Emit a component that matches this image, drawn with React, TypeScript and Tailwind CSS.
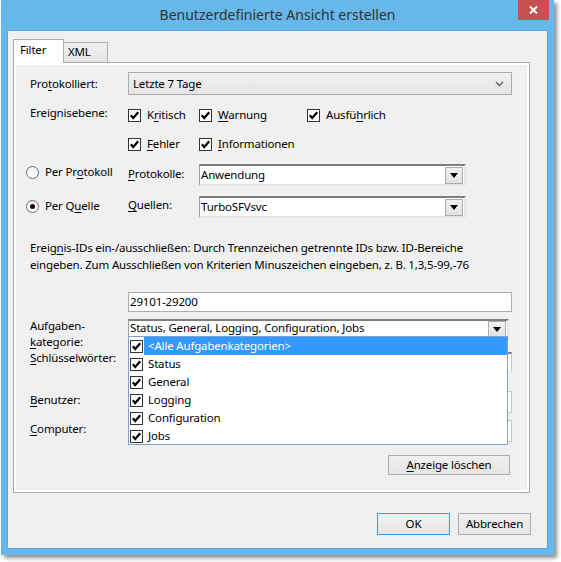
import React from "react";

function U({ children }: { children: React.ReactNode }) {
  return <span className="underline underline-offset-[2px] decoration-1">{children}</span>;
}

function Check() {
  return (
    <span className="w-[13px] h-[13px] shrink-0 border border-[#333] bg-white flex items-center justify-center">
      <svg width="11" height="11" viewBox="0 0 11 11">
        <path d="M1.8 5.3 L4.2 8 L9.2 2.2" fill="none" stroke="#000" strokeWidth="2.2" />
      </svg>
    </span>
  );
}

function CheckItem({ label, w }: { label: React.ReactNode; w?: string }) {
  return (
    <div className={`flex items-center gap-[6px] ${w ?? ""}`}>
      <Check />
      <span className="-mt-[2px]">{label}</span>
    </div>
  );
}

function Radio({ on }: { on?: boolean }) {
  return (
    <span className="w-[13px] h-[13px] shrink-0 rounded-full border border-[#6b6b6b] bg-gradient-to-b from-[#f4f4f4] to-white flex items-center justify-center">
      {on && <span className="w-[5px] h-[5px] rounded-full bg-[#1d0a0a]" />}
    </span>
  );
}

function DropBtn() {
  return (
    <span className="w-[18px] h-[17px] border border-[#adadad] bg-gradient-to-b from-[#f2f2f2] to-[#e2e2e2] flex items-center justify-center">
      <svg width="8" height="5" viewBox="0 0 8 5">
        <path d="M0 0 H8 L4 5 Z" fill="#000" />
      </svg>
    </span>
  );
}

function SunkenCombo({ value, w }: { value: string; w: string }) {
  return (
    <div
      className={`${w} h-[22px] bg-white border-t-2 border-l border-r-2 border-b-2 border-t-[#7e7e7e] border-l-[#a0a0a0] border-r-[#e6e6e6] border-b-[#e6e6e6] flex items-center justify-between pr-[1px]`}
    >
      <span className="pl-[1px]">{value}</span>
      <DropBtn />
    </div>
  );
}

const categories = ["<Alle Aufgabenkategorien>", "Status", "General", "Logging", "Configuration", "Jobs"];

export default function App() {
  return (
    <div className="w-[561px] h-[562px] bg-white font-['Segoe_UI','Noto_Sans',sans-serif] text-[11.5px] tracking-[-0.17px] text-black">
      <div className="ml-[1px] w-[553px] h-[555px] bg-[#67b7ea] shadow-[3px_3px_4px_rgba(0,0,0,0.45)] flex flex-col">
        {/* title bar */}
        <div className="h-[30px] relative flex items-center justify-center">
          <span className="text-[14px] tracking-normal text-[#333] mt-[-1px]">Benutzerdefinierte Ansicht erstellen</span>
          <div className="absolute right-[5px] top-0 w-[31px] h-[20px] bg-[#c75050] flex items-center justify-center">
            <svg width="9" height="8" viewBox="0 0 9 8">
              <path d="M1 0.5 L8 7.5 M8 0.5 L1 7.5" stroke="#fff" strokeWidth="2" />
            </svg>
          </div>
        </div>

        {/* client area */}
        <div className="mx-[6px] mb-[6px] flex-1 bg-[#f0f0f0] border border-[#5aa5db] flex flex-col">
          {/* tabs */}
          <div className="ml-[5px] mt-[8px] flex items-end relative z-10">
            <div className="w-[51px] h-[24px] bg-white border border-b-0 border-[#acacac] pl-[6px] pt-[1px]">Filter</div>
            <div className="w-[44px] h-[20px] bg-gradient-to-b from-[#f0f0f0] to-[#e5e5e5] border border-l-0 border-b-0 border-[#acacac] pl-[4px] mb-[1px]">
              XML
            </div>
          </div>
          <div className="ml-[5px] -mt-[1px] w-[517px] h-[431px] border border-[#acacac] shadow-[inset_0_0_0_2px_#fff] pl-[16px] flex flex-col">
            {/* Protokolliert */}
            <div className="mt-[9px] h-[23px] flex items-center">
              <span className="w-[98px]">
                Pro<U>t</U>okolliert:
              </span>
              <div className="w-[384px] h-[23px] border border-[#acacac] bg-gradient-to-b from-[#f0f0f0] to-[#e5e5e5] flex items-center justify-between pl-[4px] pr-[7px]">
                <span>Letzte 7 Tage</span>
                <svg width="9" height="6" viewBox="0 0 9 6">
                  <path d="M1 1 L4.5 4.5 L8 1" fill="none" stroke="#6a6a6a" strokeWidth="1.6" />
                </svg>
              </div>
            </div>

            {/* Ereignisebene */}
            <div className="mt-[11px] h-[19px] flex items-center">
              <span className="w-[98px] -mt-[5px]">Ereignisebene:</span>
              <CheckItem w="w-[71px]" label={<>K<U>r</U>itisch</>} />
              <CheckItem w="w-[108px]" label={<><U>W</U>arnung</>} />
              <CheckItem label={<>Ausfü<U>h</U>rlich</>} />
            </div>
            <div className="mt-[10px] h-[19px] flex items-center pl-[98px]">
              <CheckItem w="w-[71px]" label={<><U>F</U>ehler</>} />
              <CheckItem label={<><U>I</U>nformationen</>} />
            </div>

            {/* Per Protokoll */}
            <div className="mt-[10px] h-[22px] flex items-start -ml-[4px]">
              <div className="w-[102px] flex items-center gap-[6px] mt-[1px]">
                <Radio />
                <span className="-mt-[2px]">
                  Per Pr<U>o</U>tokoll
                </span>
              </div>
              <span className="w-[71px] mt-[1px]">
                <U>P</U>rotokolle:
              </span>
              <SunkenCombo w="w-[267px]" value="Anwendung" />
            </div>
            <div className="mt-[10px] h-[22px] flex items-start -ml-[4px]">
              <div className="w-[102px] flex items-center gap-[6px] mt-[3px]">
                <Radio on />
                <span className="-mt-[2px]">
                  Per Q<U>u</U>elle
                </span>
              </div>
              <span className="w-[71px] mt-[0px]">
                <U>Q</U>uellen:
              </span>
              <SunkenCombo w="w-[267px]" value="TurboSFVsvc" />
            </div>

            {/* description */}
            <p className="mt-[21px] leading-[17px]">
              Ereig<U>n</U>is-IDs ein-/ausschließen: Durch Trennzeichen getrennte IDs bzw. ID-Bereiche
              <br />
              eingeben. Zum Ausschließen von Kriterien Minuszeichen eingeben, z. B. 1,3,5-99,-76
            </p>

            <div className="mt-[19px] ml-[98px] w-[384px] h-[20px] border border-[#abadb3] bg-white flex items-center pl-[1px]">
              29101-29200
            </div>

            {/* Aufgabenkategorie */}
            <div className="mt-[7px] h-[22px] flex items-start">
              <span className="w-[98px] leading-[16px] -mt-[1px]">
                Aufgaben-
                <br />
                <U>k</U>ategorie:
              </span>
              <div className="relative">
                <div className="w-[381px] h-[22px] bg-white border-t-2 border-l border-r-2 border-b-2 border-t-[#7e7e7e] border-l-[#a0a0a0] border-r-[#e6e6e6] border-b-[#e6e6e6] flex items-start justify-between pr-[1px]">
                  <span className="pl-[1px] -mt-[2px]">Status, General, Logging, Configuration, Jobs</span>
                  <DropBtn />
                </div>
                <div className="absolute left-0 top-[17px] w-[380px] h-[109px] bg-white border border-[#7da2ce] z-20 flex flex-col">
                  {categories.map((c, i) => (
                    <div key={c} className="h-[18px] flex items-center pl-[1px]">
                      <Check />
                      <span
                        className={`ml-[1px] h-[18px] flex-1 flex items-center pl-[4px] ${
                          i === 0 ? "bg-[#3399ff] text-white" : ""
                        }`}
                      >
                        {c}
                      </span>
                    </div>
                  ))}
                </div>
              </div>
            </div>

            {/* Schlüsselwörter */}
            <div className="mt-[11px] h-[20px] flex items-start">
              <span className="w-[98px] -mt-[3px]">
                <U>S</U>chlüsselwörter:
              </span>
              <div className="w-[384px] h-[20px] bg-white border-t-2 border-l border-r border-b border-t-[#7e7e7e] border-l-[#a0a0a0] border-r-[#c8c8c8] border-b-[#e3e3e3]" />
            </div>

            <div className="mt-[19px] h-[22px] flex items-start">
              <span className="w-[98px]">
                <U>B</U>enutzer:
              </span>
              <div className="w-[384px] h-[22px] bg-white border border-[#c8c8c8]" />
            </div>

            <div className="mt-[7px] h-[22px] flex items-start">
              <span className="w-[98px]">
                <U>C</U>omputer:
              </span>
              <div className="w-[384px] h-[22px] bg-white border border-[#c8c8c8]" />
            </div>

            <div className="mt-[13px] flex justify-end pr-[19px]">
              <div className="w-[122px] h-[20px] border border-[#acacac] bg-gradient-to-b from-[#f0f0f0] to-[#e5e5e5] flex items-center justify-center">
                <span>
                  <U>A</U>nzeige löschen
                </span>
              </div>
            </div>
          </div>

          {/* dialog buttons */}
          <div className="mt-[20px] ml-[369px] flex gap-[8px]">
            <div className="w-[73px] h-[22px] border border-[#3c9ae6] bg-gradient-to-b from-[#f0f0f0] to-[#e5e5e5] flex items-center justify-center">
              OK
            </div>
            <div className="w-[73px] h-[22px] border border-[#acacac] bg-gradient-to-b from-[#f0f0f0] to-[#e5e5e5] flex items-center justify-center">
              Abbrechen
            </div>
          </div>
        </div>
      </div>
    </div>
  );
}
